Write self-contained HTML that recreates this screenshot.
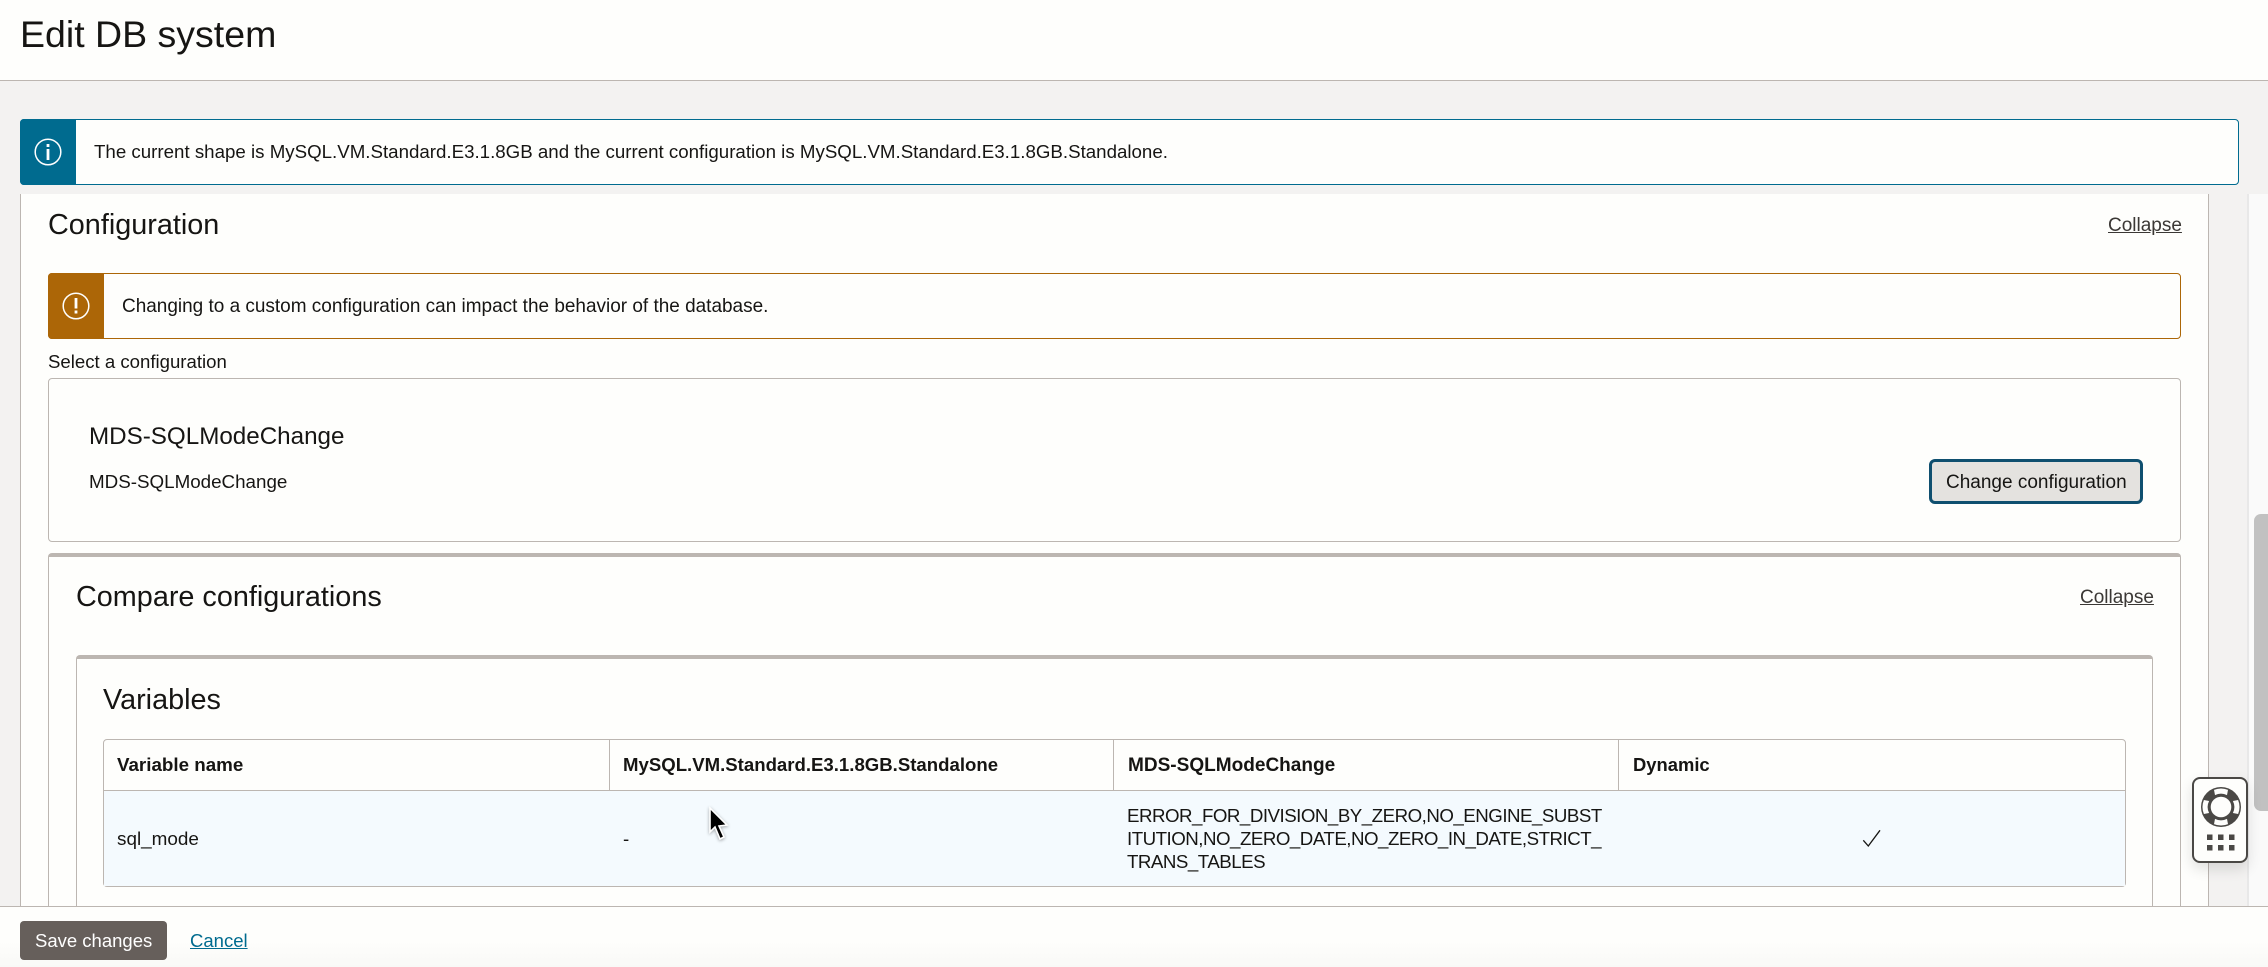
<!DOCTYPE html>
<html lang="en"><head><meta charset="utf-8"><title>Edit DB system</title>
<style>
html,body{margin:0;padding:0;width:2268px;height:967px;overflow:hidden;background:#f3f2f1}
body{position:relative;font-family:"Liberation Sans",Arial,sans-serif;color:#161513;font-size:18.7px}
.a{position:absolute;box-sizing:border-box}
.t{position:absolute;white-space:nowrap;line-height:24px;height:24px}
.h{font-size:28.8px;line-height:34px;height:34px}
.b{font-weight:700}
.u{text-decoration:underline;color:#3b3835;font-size:19px}
.box{background:#fefefc;border:1px solid #bcb6b1}
</style></head><body>
<div class="a" style="left:0;top:0;width:2268px;height:81px;background:#fefefc;border-bottom:1px solid #bcb6b1"></div>
<div class="t" style="left:20px;top:12px;font-size:37.5px;line-height:44px;height:44px">Edit DB system</div>

<div class="a" style="left:2247px;top:194px;width:21px;height:713px;background:#fafafa;border-left:2px solid #e8e8e8"></div>
<div class="a" style="left:2254px;top:514px;width:14px;height:297px;background:#c1c1c1;border-radius:7px 0 0 7px"></div>

<div class="a" style="left:20px;top:194px;width:2189px;height:713px;background:#fefefc;border-left:1px solid #bcb6b1;border-right:1px solid #bcb6b1"></div>

<div class="a" style="left:20px;top:119px;width:2219px;height:66px;background:#fefefc;border:1px solid #006b8f;border-radius:4px"></div>
<div class="a" style="left:20px;top:119px;width:56px;height:66px;background:#006b8f;border-radius:4px 0 0 4px"></div>
<svg class="a" style="left:20px;top:119px" width="56" height="66" viewBox="0 0 56 66"><circle cx="28" cy="33" r="12.8" fill="none" stroke="#fff" stroke-width="1.5"/><rect x="26.6" y="30" width="2.8" height="11" fill="#fff"/><rect x="26.6" y="25" width="2.8" height="3" fill="#fff"/></svg>
<div class="t" style="left:94px;top:140px;font-size:18.72px">The current shape is MySQL.VM.Standard.E3.1.8GB and the current configuration is MySQL.VM.Standard.E3.1.8GB.Standalone.</div>

<div class="t h" style="left:48px;top:208px">Configuration</div>
<div class="t u" style="left:2108px;top:214px">Collapse</div>

<div class="a" style="left:48px;top:273px;width:2133px;height:66px;background:#fefefc;border:1px solid #ac6607;border-radius:4px"></div>
<div class="a" style="left:48px;top:273px;width:56px;height:66px;background:#ac6607;border-radius:4px 0 0 4px"></div>
<svg class="a" style="left:48px;top:273px" width="56" height="66" viewBox="0 0 56 66"><circle cx="28" cy="33" r="12.8" fill="none" stroke="#fff" stroke-width="1.5"/><rect x="26.6" y="25" width="2.8" height="10.500" fill="#fff"/><rect x="26.6" y="37.5" width="2.8" height="3" fill="#fff"/></svg>
<div class="t" style="left:122px;top:295px;font-size:18.98px">Changing to a custom configuration can impact the behavior of the database.</div>

<div class="t" style="left:48px;top:350px;font-size:18.6px">Select a configuration</div>

<div class="a box" style="left:48px;top:378px;width:2133px;height:164px;border-radius:4px"></div>
<div class="t" style="left:89px;top:422px;font-size:24.2px;line-height:30px;height:30px">MDS-SQLModeChange</div>
<div class="t" style="left:89px;top:470px;font-size:18.8px">MDS-SQLModeChange</div>
<div class="a" style="left:1929px;top:459px;width:214px;height:45px;background:#e4e2df;border:3px solid #0f4f6f;border-radius:6px"></div>
<div class="t" style="left:1946px;top:471px;font-size:19px">Change configuration</div>

<div class="a" style="left:48px;top:553px;width:2133px;height:354px;background:#fefefc;border:1px solid #bcb6b1;border-top:4px solid #bcb6b1;border-bottom:0;border-radius:4px 4px 0 0"></div>
<div class="t h" style="left:76px;top:580px">Compare configurations</div>
<div class="t u" style="left:2080px;top:586px">Collapse</div>

<div class="a" style="left:76px;top:655px;width:2077px;height:252px;background:#fefefc;border:1px solid #bcb6b1;border-top:4px solid #bcb6b1;border-bottom:0;border-radius:4px 4px 0 0"></div>
<div class="t h" style="left:103px;top:683px">Variables</div>

<div class="a" style="left:103px;top:739px;width:2023px;height:148px;background:#fefefc;border:1px solid #bcb6b1;border-radius:4px"></div>
<div class="a" style="left:104px;top:791px;width:2021px;height:95px;background:#f4fafe"></div>
<div class="a" style="left:104px;top:790px;width:2021px;height:1px;background:#bcb6b1"></div>
<div class="a" style="left:609px;top:740px;width:1px;height:50px;background:#bcb6b1"></div>
<div class="a" style="left:1113px;top:740px;width:1px;height:50px;background:#bcb6b1"></div>
<div class="a" style="left:1618px;top:740px;width:1px;height:50px;background:#bcb6b1"></div>
<div class="t b" style="left:117px;top:753px;font-size:18.8px">Variable name</div>
<div class="t b" style="left:623px;top:753px;font-size:18.6px">MySQL.VM.Standard.E3.1.8GB.Standalone</div>
<div class="t b" style="left:1128px;top:754px;font-size:19.05px">MDS-SQLModeChange</div>
<div class="t b" style="left:1633px;top:753px;font-size:18.4px">Dynamic</div>
<div class="t" style="left:117px;top:828px;font-size:18.9px">sql_mode</div>
<div class="t" style="left:623px;top:827px">-</div>
<div class="t" style="left:1127px;top:804px;line-height:23px;letter-spacing:-.5px">ERROR_FOR_DIVISION_BY_ZERO,NO_ENGINE_SUBST<br>ITUTION,NO_ZERO_DATE,NO_ZERO_IN_DATE,STRICT_<br>TRANS_TABLES</div>
<svg class="a" style="left:1860px;top:826px" width="24" height="24" viewBox="0 0 24 24"><path d="M3.3 14.300 L8.300 20 L20 4.300" fill="none" stroke="#161513" stroke-width="1.3"/></svg>

<svg class="a" style="left:703px;top:805px;filter:drop-shadow(0 1px 1.5px rgba(0,0,0,.35))" width="30" height="42" viewBox="0 0 30 42"><path d="M7 3 L7 27 L12 22 L17 34 L21 32 L16 21 L24 20 Z" fill="#000" stroke="#fff" stroke-width="1.6"/></svg>

<div class="a" style="left:0;top:906px;width:2268px;height:61px;background:linear-gradient(#fefefc 55%,#f9f9f7);border-top:1px solid #bcb6b1"></div>
<div class="a" style="left:20px;top:921px;width:147px;height:39px;background:#665f5b;border-radius:4px"></div>
<div class="t" style="left:35px;top:929px;color:#fff;font-size:18.5px">Save changes</div>
<div class="t" style="left:190px;top:929px;color:#006b8f;text-decoration:underline;font-size:18.5px">Cancel</div>

<div class="a" style="left:2192px;top:777px;width:56px;height:86px;background:#fefefc;border:2px solid #4a4845;border-radius:8px;box-shadow:0 6px 14px rgba(0,0,0,.12)"></div>
<svg class="a" style="left:2192px;top:777px" width="56" height="86" viewBox="0 0 56 86">
<circle cx="29" cy="30" r="20" fill="#4a4845"/>
<g fill="#fefefc"><path d="M22 12.900 A18.500 18.500 0 0 1 36 12.900 L35 18.100 A13.300 13.300 0 0 0 23 18.100 Z"/><path d="M22 12.900 A18.500 18.500 0 0 1 36 12.900 L35 18.100 A13.300 13.300 0 0 0 23 18.100 Z" transform="rotate(90 29 30)"/><path d="M22 12.900 A18.500 18.500 0 0 1 36 12.900 L35 18.100 A13.300 13.300 0 0 0 23 18.100 Z" transform="rotate(180 29 30)"/><path d="M22 12.900 A18.500 18.500 0 0 1 36 12.900 L35 18.100 A13.300 13.300 0 0 0 23 18.100 Z" transform="rotate(270 29 30)"/></g>
<circle cx="29" cy="30" r="10.3" fill="#fefefc"/>
<g fill="#4a4845"><rect x="15" y="57.5" width="5.5" height="5.5"/><rect x="26" y="57.5" width="5.5" height="5.5"/><rect x="37" y="57.5" width="5.5" height="5.5"/><rect x="15" y="68" width="5.5" height="5.5"/><rect x="26" y="68" width="5.5" height="5.5"/><rect x="37" y="68" width="5.5" height="5.5"/></g>
</svg>
</body></html>
